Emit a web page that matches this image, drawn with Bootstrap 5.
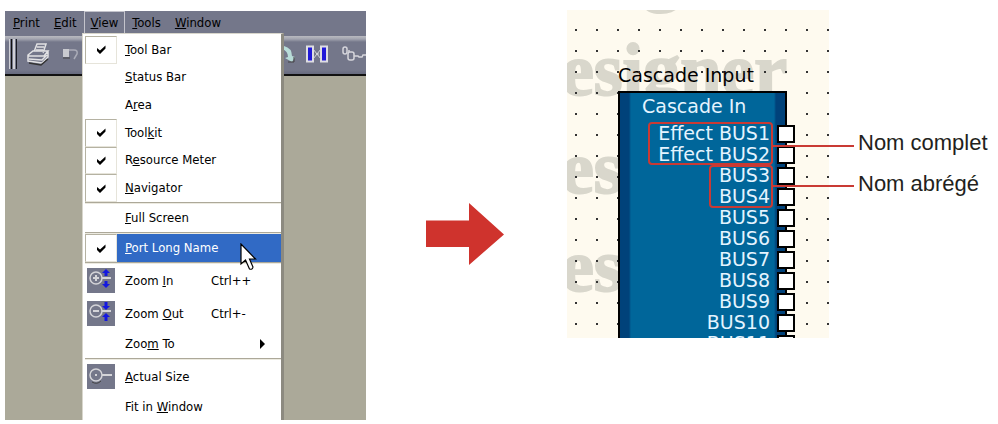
<!DOCTYPE html>
<html lang="fr">
<head>
<meta charset="utf-8">
<meta name="viewport" content="width=device-width, initial-scale=1">
<title>Port Long Name</title>
<link href="https://cdn.jsdelivr.net/npm/bootstrap@5.3.0/dist/css/bootstrap.min.css" rel="stylesheet">
<style>
body{background:#fff;color:#000}
.figure-grid{display:grid;grid-template-columns:361fr 201fr 262fr 169fr;padding:10px 0 0 5px;align-items:start}
/* application window */
.app-win{min-height:409px;margin-top:1px;background:#aba999;font:13px/16px "DejaVu Sans Condensed","DejaVu Sans",sans-serif}
.menu-strip{background:#74778a;height:23px;padding-left:1px}
.menu-strip button{border:0;background:none;padding:0 7px;color:#000;border-radius:0}
.menu-strip button.open-menu{border:1px solid #c4c4cc;border-bottom:0;padding:0 6px}
.tool-strip{background:linear-gradient(#74778a 0 2px,#b9bac0 2px,#a3a5b0 5px,#74778a 8px,#74778a 36px,#666a7e);height:42px;border-bottom:2px solid #111;padding:0 0 0 4px}
.tool-strip button{border:0;background:none;padding:0;line-height:0}
.grip{width:8px;height:30px;border:solid #1b1c24;border-width:0 1px 0 0;background:linear-gradient(90deg,#d0d0d6 0 1px,#74778a 1px 2px,#111 2px 3px,#74778a 3px 4px,#d0d0d6 4px 6px,#74778a 6px)}
.drop-panel{left:77px;top:22px;width:202px;background:#fff;border:1px solid #d8d6cc;border-right:3px solid #8c8a80;border-bottom:0;padding:2px 0 0 2px}
.menu-group{display:grid;grid-auto-rows:1fr}
.six{min-height:166px}
.entry{border:0;background:none;padding:0;text-align:left;color:#000;min-height:28px}
.six .entry{min-height:27px}
.entry .slot{width:32px;align-self:stretch}
.entry .slot.on{border:1px solid #b5b2a2;border-right-color:#e6e4da;border-bottom-color:#e6e4da}
.entry .caption{flex:1;align-self:stretch;padding-left:8px;display:flex;align-items:center}
.entry.chosen .caption{background:#316ac5;color:#fff}
.entry .keys{width:70px}
.tall .entry{min-height:33px}
.icon-tile{background:#74778a;width:28px;height:25px}
.rule{height:2px;background:#aca899;border-bottom:1px solid #eceae0}
.cursor{left:235px;top:232px}
/* schematic canvas */
.sheet{height:328px;background:#fefaef}
.caption-top{left:51px;top:55px}
.pix{font:19px/21px "DejaVu Sans",sans-serif}
.block-node{left:51px;top:81px;width:169px;height:260px;border:2px solid #000;color:#e4f4ff;background:linear-gradient(90deg,#00427a 0 9px,#00669a 11px 154px,#00427a 156px)}
.block-title{height:30px;padding:3px 0 0 22px}
.port-list{margin:0 -10px 0 0;padding:0;list-style:none}
.port-list li{display:flex;justify-content:flex-end;align-items:center;gap:7px;height:21px}
.port-list li::after{content:"";width:18px;height:18px;background:#fff;border:2px solid #000}
.ring{border:2px solid #c93a34;border-radius:4px}
.ring-long{left:81px;top:112px;width:125px;height:43px}
.ring-short{left:142px;top:155px;width:64px;height:43px}
.lead-line{left:205px;right:-25px;height:2px;background:#c93a34}
.lead-long{top:135px}.lead-short{top:175px}
.notes{padding:119px 0 0 29px;font:22px/28px "Liberation Sans",Arial,sans-serif;color:#231f20;white-space:nowrap}
.notes p{margin:0 0 13px}
.arrow-cell{padding:192px 0 0 59px}
</style>
<script src="https://cdn.jsdelivr.net/npm/bootstrap@5.3.0/dist/js/bootstrap.bundle.min.js"></script>
</head>
<body>
<svg width="0" height="0" class="position-absolute" aria-hidden="true">
<symbol id="tick" viewBox="0 0 10 9"><path d="M1 3v3l3 3 5.500-5.500V.5L4 5.500z"/></symbol>
</svg>
<main class="figure-grid">
<section class="app-win position-relative">
  <nav class="menu-strip d-flex" aria-label="Menu">
    <button type="button"><u>P</u>rint</button><button type="button"><u>E</u>dit</button><button type="button" class="open-menu"><u>V</u>iew</button><button type="button"><u>T</u>ools</button><button type="button"><u>W</u>indow</button>
  </nav>
  <div class="tool-strip d-flex align-items-center">
    <span class="grip"></span>
    <button type="button" class="ms-2" aria-label="Print"><svg width="26" height="24" viewBox="0 0 26 24" fill="none" stroke="#e2e2e4" stroke-width="1.500"><path d="M9 10l3-8h9l-3 9M12 5h7M11 8h7"/><path d="M3 13l5-4h15l-4 5H3zM3 14v5l14 2 6-6V9M4 17l13 1 5-5" fill="#74778a"/><path d="M4 21l12 2 7-6" stroke="#333"/></svg></button>
    <button type="button" class="ms-2" aria-label="Undo"><svg width="20" height="16" viewBox="0 0 20 16"><path d="M4 3h6v8H4z" fill="#c9cad0"/><path d="M10 4h5q4 0 3 4l-3 5" fill="none" stroke="#aaacb8" stroke-width="1.500"/><path d="M4 12h7" stroke="#444" /></svg></button>
    <span class="flex-fill"></span>
    <button type="button" aria-label="Redo"><svg width="14" height="20" viewBox="0 0 14 20"><path d="M2 2q8 2 8 10l3 1-3 5-7-4 3-1Q6 7 0 5z" fill="#b8dcd8"/><path d="M12 13v5H6" fill="none" stroke="#444"/></svg></button>
    <button type="button" class="ms-2 me-2" aria-label="Align"><svg width="25" height="20" viewBox="0 0 25 20"><path d="M3 2.500h6v15H3zM17 2.500h6v15h-6z" fill="#2018d8" stroke="#dedee2" stroke-width="2"/><path d="M9 5l8 10M9 15l8-10M12 10h3" stroke="#d6d6dc" fill="none"/></svg></button>
    <button type="button" class="ms-1" aria-label="Zoom"><svg width="25" height="20" viewBox="0 0 25 20" fill="none" stroke="#d6d6dc" stroke-width="1.500"><rect x="2" y="3" width="4" height="7" rx="2"/><rect x="7" y="8" width="6" height="8" rx="2"/><path d="M13 12h4l1 1h3l1-2h3M8 6v2"/></svg></button>
  </div>
  <div class="drop-panel position-absolute">
    <div class="menu-group six">
      <button class="entry d-flex align-items-center" type="button"><span class="slot on d-flex align-items-center justify-content-center"><svg width="10" height="9"><use href="#tick"/></svg></span><span class="caption"><span><u>T</u>ool Bar</span></span></button>
      <button class="entry d-flex align-items-center" type="button"><span class="slot"></span><span class="caption"><span><u>S</u>tatus Bar</span></span></button>
      <button class="entry d-flex align-items-center" type="button"><span class="slot"></span><span class="caption"><span>A<u>r</u>ea</span></span></button>
      <button class="entry d-flex align-items-center" type="button"><span class="slot on d-flex align-items-center justify-content-center"><svg width="10" height="9"><use href="#tick"/></svg></span><span class="caption"><span>Tool<u>k</u>it</span></span></button>
      <button class="entry d-flex align-items-center" type="button"><span class="slot on d-flex align-items-center justify-content-center"><svg width="10" height="9"><use href="#tick"/></svg></span><span class="caption"><span>R<u>e</u>source Meter</span></span></button>
      <button class="entry d-flex align-items-center" type="button"><span class="slot on d-flex align-items-center justify-content-center"><svg width="10" height="9"><use href="#tick"/></svg></span><span class="caption"><span><u>N</u>avigator</span></span></button>
    </div>
    <div class="rule"></div>
    <div class="menu-group">
      <button class="entry d-flex align-items-center" type="button"><span class="slot"></span><span class="caption"><span><u>F</u>ull Screen</span></span></button>
    </div>
    <div class="rule"></div>
    <div class="menu-group">
      <button class="entry chosen d-flex align-items-center" type="button"><span class="slot on d-flex align-items-center justify-content-center"><svg width="10" height="9"><use href="#tick"/></svg></span><span class="caption"><span><u>P</u>ort Long Name</span></span></button>
    </div>
    <div class="rule"></div>
    <div class="menu-group tall">
      <button class="entry d-flex align-items-center" type="button"><span class="slot d-flex align-items-center justify-content-center"><svg class="icon-tile" viewBox="0 0 28 25"><g fill="none" stroke="#d4d4d8" stroke-width="1.500"><circle cx="9" cy="10" r="6"/><path d="M6 10h6M9 7v6M15 10h9" stroke-width="2"/></g><path d="M19 1l4 4h-2.500v3h-3V5H15zM19 20l4-4h-2.500v-3h-3v3H15z" fill="#1418e0"/></svg></span><span class="caption"><span>Zoom <u>I</u>n</span></span><span class="keys">Ctrl++</span></button>
      <button class="entry d-flex align-items-center" type="button"><span class="slot d-flex align-items-center justify-content-center"><svg class="icon-tile" viewBox="0 0 28 25"><g fill="none" stroke="#d4d4d8" stroke-width="1.500"><circle cx="9" cy="10" r="6"/><path d="M6 10h6M15 10h9" stroke-width="2"/></g><path d="M19 9l4-4h-2.500V1h-3v4H15zM19 12l4 4h-2.500v4h-3v-4H15z" fill="#1418e0"/></svg></span><span class="caption"><span>Zoom <u>O</u>ut</span></span><span class="keys">Ctrl+-</span></button>
    </div>
    <div class="menu-group">
      <button class="entry d-flex align-items-center" type="button"><span class="slot"></span><span class="caption"><span>Zoo<u>m</u> To</span></span><svg class="me-3" width="5" height="10"><path d="M0 0l5 5-5 5z"/></svg></button>
    </div>
    <div class="rule"></div>
    <div class="menu-group tall">
      <button class="entry d-flex align-items-center" type="button"><span class="slot d-flex align-items-center justify-content-center"><svg class="icon-tile" viewBox="0 0 28 25"><g fill="none" stroke="#d4d4d8" stroke-width="1.500"><circle cx="9" cy="11" r="6"/><path d="M15 11h10" stroke-width="2"/><path d="M8 11h2" stroke-width="2"/></g><path d="M5 18q5 3 9-1" fill="none" stroke="#444"/></svg></span><span class="caption"><span><u>A</u>ctual Size</span></span></button>
    </div>
    <div class="menu-group">
      <button class="entry d-flex align-items-center" type="button"><span class="slot"></span><span class="caption"><span>Fit in <u>W</u>indow</span></span></button>
    </div>
  </div>
  <svg class="cursor position-absolute" width="18" height="28" viewBox="0 0 18 28"><path d="M1 1v20l4.500-4L9.500 26q3 1 3.500-2l-3.500-8h6z" fill="#fff" stroke="#000" stroke-width="1.200"/></svg>
</section>

<div class="arrow-cell"><svg class="d-block" width="80" height="64" viewBox="0 0 80 64"><path d="M1 18.500h43V1l35 31.500L44 63V45H1z" fill="#cf332d"/></svg></div>

<section class="position-relative">
  <div class="sheet position-relative overflow-hidden">
    <svg class="position-absolute top-0 start-0" width="100%" height="100%">
      <g font-family="Liberation Serif, serif" font-weight="700" font-size="74" fill="#d9d7cc" stroke="#d9d7cc" stroke-width="2" text-anchor="end">
        <text x="220" y="-13">Designer</text><text x="220" y="85">Designer</text><text x="220" y="183">Designer</text><text x="220" y="281">Designer</text>
      </g>
    </svg>
    <div class="caption-top pix position-absolute">Cascade Input</div>
    <svg class="position-absolute top-0 start-0" width="100%" height="100%">
      <defs><pattern id="dots" width="21" height="21" patternUnits="userSpaceOnUse"><rect x="8" y="19" width="2" height="2" fill="#333"/></pattern></defs>
      <rect width="100%" height="100%" fill="url(#dots)"/>
    </svg>
    <div class="block-node pix position-absolute">
      <div class="block-title">Cascade In</div>
      <ul class="port-list"><li>Effect BUS1</li><li>Effect BUS2</li><li>BUS3</li><li>BUS4</li><li>BUS5</li><li>BUS6</li><li>BUS7</li><li>BUS8</li><li>BUS9</li><li>BUS10</li><li>BUS11</li></ul>
    </div>
    <span class="ring ring-long position-absolute"></span><span class="ring ring-short position-absolute"></span>
  </div>
  <span class="lead-line lead-long position-absolute"></span><span class="lead-line lead-short position-absolute"></span>
</section>

<aside class="notes"><p>Nom complet</p><p>Nom abrégé</p></aside>
</main>
</body>
</html>
